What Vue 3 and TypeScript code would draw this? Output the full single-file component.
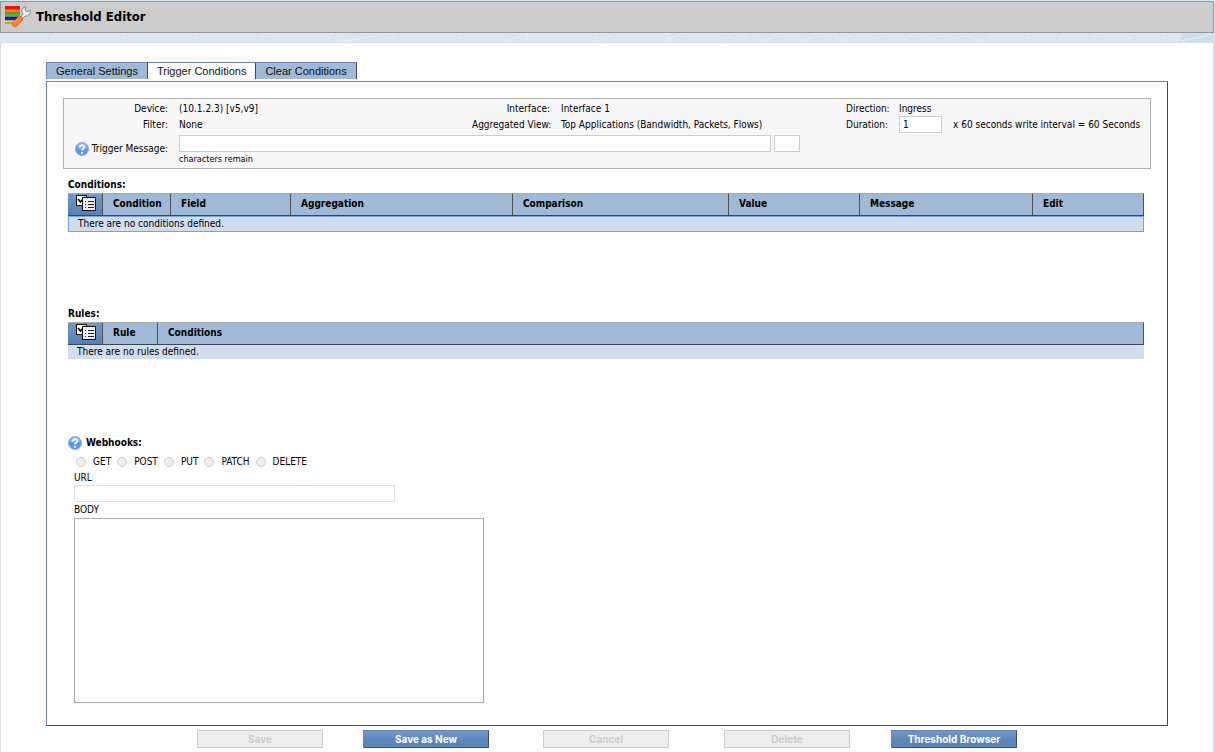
<script setup lang="ts">
import { ref } from 'vue'

const tabs = ['General Settings', 'Trigger Conditions', 'Clear Conditions']
const activeTab = ref('Trigger Conditions')
const duration = ref('1')
const message = ref('')
const methods = ['GET', 'POST', 'PUT', 'PATCH', 'DELETE']
const conditionColumns = ['Condition', 'Field', 'Aggregation', 'Comparison', 'Value', 'Message', 'Edit']
const actions = [
  { label: 'Save', enabled: false },
  { label: 'Save as New', enabled: true },
  { label: 'Cancel', enabled: false },
  { label: 'Delete', enabled: false },
  { label: 'Threshold Browser', enabled: true },
]
const streaks = [
  [56, 51], [127, 122], [197, 192], [265, 260], [332, 327], [395, 392], [461, 459],
  [528, 504], [528, 526], [596, 596], [617, 597], [668, 669], [684, 664], [735, 719],
  [745, 748], [779, 764], [818, 804], [834, 841], [855, 841],
  [886, 872], [914, 903], [942, 931], [992, 989], [1031, 1027], [1064, 1060],
  [1098, 1092], [1134, 1128], [1168, 1162],
]
</script>

<template>
  <div class="page">
    <header class="title-bar">
      <svg class="logo" viewBox="0 0 28 24" aria-hidden="true">
        <rect x="0" y="1" width="15" height="3" fill="#f01010" />
        <rect x="0" y="5" width="15" height="3" fill="#e8890c" />
        <rect x="0" y="8" width="15" height="3" fill="#18d838" />
        <rect x="0" y="12" width="13" height="3" fill="#1010e8" />
        <rect x="0" y="15" width="10" height="3" fill="#e8e020" />
        <path d="M0 4.5H15M0 8H15M0 11.5H14M0 15H11M0 18H8" stroke="#555" stroke-width=".7" />
        <path d="M14 14L18 9C15 5 18 2 21 2L20 5L22 7L25 5C26 9 23 12 20 11L16 15Z" fill="#eee" stroke="#888" stroke-width="1" />
        <path d="M10 19L15 14" stroke="#c4602a" stroke-width="6" stroke-linecap="round" />
        <path d="M10 19L15 14" stroke="#ff7a2c" stroke-width="5" stroke-linecap="round" />
        <path d="M9 18L13 14" stroke="#ffb27c" stroke-width="1" stroke-linecap="round" />
      </svg>
      <h1>Threshold Editor</h1>
    </header>
    <svg class="strip" viewBox="0 0 1215 9" preserveAspectRatio="none" aria-hidden="true">
      <path d="M1184 0H1215V9H1180Z" fill="#c9dff2" />
      <path v-for="(s, i) in streaks" :key="i" :d="`M${s[0]} 0L${s[1]} 9`" stroke="#e8f1f8" stroke-width="1" />
      <path d="M340 9L385 1M960 1L985 9M1182 8L1213 1" stroke="#e8f1f8" fill="none" />
    </svg>

    <main class="panel">
      <nav class="tabs" role="tablist">
        <button
          v-for="t in tabs"
          :key="t"
          type="button"
          role="tab"
          :aria-selected="activeTab === t"
          :class="['tab', { active: activeTab === t }]"
          @click="activeTab = t"
        >{{ t }}</button>
      </nav>

      <div class="content">
        <section class="info">
          <span class="label">Device:</span><span>(10.1.2.3) [v5,v9]</span>
          <span class="label">Interface:</span><span>Interface 1</span>
          <span class="label">Direction:</span><span>Ingress</span>
          <span class="label">Filter:</span><span>None</span>
          <span class="label">Aggregated View:</span><span>Top Applications (Bandwidth, Packets, Flows)</span>
          <label class="label" for="duration">Duration:</label>
          <span class="duration">
            <input id="duration" v-model="duration" type="text">
            <span>x 60 seconds write interval = 60 Seconds</span>
          </span>
          <label class="label message-label" for="message">
            <svg class="help" viewBox="0 0 14 14" aria-hidden="true">
              <circle cx="7" cy="7" r="6.5" fill="#5b94f5" stroke="#8fb0e6" />
              <path d="M2 6A5 5 0 0 1 12 6Q7 8 2 6Z" fill="#8db7fb" />
              <path d="M4.8 5.4C4.8 2.5 9.3 2.6 9.3 5.1C9.3 6.8 7 6.7 7 8.6" fill="none" stroke="#fff" stroke-width="1.7" />
              <circle cx="7" cy="10.8" r="1.1" fill="#fff" />
            </svg>
            Trigger Message:
          </label>
          <div class="message">
            <div class="message-row">
              <input id="message" v-model="message" class="message-input" type="text">
              <input class="counter" type="text" aria-label="Characters remaining" readonly>
            </div>
            <small>characters remain</small>
          </div>
        </section>

        <section class="block">
          <h2>Conditions:</h2>
          <table class="conditions">
            <colgroup>
              <col class="c-icon"><col class="c-cond"><col class="c-field"><col class="c-agg">
              <col class="c-comp"><col class="c-val"><col class="c-msg"><col class="c-edit">
            </colgroup>
            <thead>
              <tr>
                <th class="pick">
                  <button type="button" aria-label="Select conditions">
                    <svg viewBox="0 0 20 16" aria-hidden="true">
                      <rect x=".5" y=".5" width="10" height="10" fill="#fff" stroke="#111" />
                      <path d="M2 4L4.5 7L9 2" fill="none" stroke="#111" stroke-width="1.8" />
                      <rect x="6.5" y="2.5" width="13" height="13" fill="#eee" stroke="#111" />
                      <path d="M9 6.5H10M9 9.5H10M9 12.5H10M12 6.5H18M12 9.5H18M12 12.5H18" stroke="#222" />
                    </svg>
                  </button>
                </th>
                <th v-for="c in conditionColumns" :key="c" scope="col">{{ c }}</th>
              </tr>
            </thead>
            <tbody>
              <tr><td colspan="8">There are no conditions defined.</td></tr>
            </tbody>
          </table>
        </section>

        <section class="block">
          <h2>Rules:</h2>
          <table class="rules">
            <colgroup><col class="c-icon"><col class="c-rule"><col></colgroup>
            <thead>
              <tr>
                <th class="pick">
                  <button type="button" aria-label="Select rules">
                    <svg viewBox="0 0 20 16" aria-hidden="true">
                      <rect x=".5" y=".5" width="10" height="10" fill="#fff" stroke="#111" />
                      <path d="M2 4L4.5 7L9 2" fill="none" stroke="#111" stroke-width="1.8" />
                      <rect x="6.5" y="2.5" width="13" height="13" fill="#eee" stroke="#111" />
                      <path d="M9 6.5H10M9 9.5H10M9 12.5H10M12 6.5H18M12 9.5H18M12 12.5H18" stroke="#222" />
                    </svg>
                  </button>
                </th>
                <th scope="col">Rule</th>
                <th scope="col">Conditions</th>
              </tr>
            </thead>
            <tbody>
              <tr><td colspan="3">There are no rules defined.</td></tr>
            </tbody>
          </table>
        </section>

        <section class="webhooks">
          <h2>
            <svg class="help" viewBox="0 0 14 14" aria-hidden="true">
              <circle cx="7" cy="7" r="6.5" fill="#5b94f5" stroke="#8fb0e6" />
              <path d="M2 6A5 5 0 0 1 12 6Q7 8 2 6Z" fill="#8db7fb" />
              <path d="M4.8 5.4C4.8 2.5 9.3 2.6 9.3 5.1C9.3 6.8 7 6.7 7 8.6" fill="none" stroke="#fff" stroke-width="1.7" />
              <circle cx="7" cy="10.8" r="1.1" fill="#fff" />
            </svg>
            Webhooks:
          </h2>
          <div class="fields">
            <div class="methods">
              <label v-for="m in methods" :key="m"><input type="radio" name="method" :value="m" disabled>{{ m }}</label>
            </div>
            <label for="url">URL</label>
            <input id="url" class="url" type="text" disabled>
            <label for="body">BODY</label>
            <textarea id="body" class="body" disabled></textarea>
          </div>
        </section>
      </div>

      <footer class="actions">
        <button v-for="a in actions" :key="a.label" type="button" :disabled="!a.enabled">{{ a.label }}</button>
      </footer>
    </main>
  </div>
</template>

<style>
body {
  background: #dbe7f2;
}
</style>

<style scoped>
* {
  box-sizing: border-box;
}
.page {
  min-height: 100vh;
  display: flex;
  flex-direction: column;
  padding: 1px 1px 0 0;
  font: 10px/16px "DejaVu Sans Condensed", "DejaVu Sans", sans-serif;
  color: #000;
}
.title-bar {
  display: flex;
  align-items: center;
  gap: 3px;
  height: 32px;
  padding-left: 4px;
  background: #ccc;
  border: 1px solid #999;
}
.logo {
  width: 28px;
  height: 24px;
}
h1 {
  margin: 0;
  font-size: 13px;
}
.strip {
  display: block;
  width: 100%;
  height: 9px;
}
.panel {
  flex: 1;
  padding: 19px 45px 3px;
  background: #fdfdfd;
  border: 1px solid #ddd;
  border-bottom: 0;
}
.tabs {
  display: flex;
  margin-bottom: 2px;
}
.tab {
  height: 17px;
  padding: 1px 9px 0;
  font: 11px/15px "Liberation Sans", Arial, sans-serif;
  color: #111;
  background: #a0b9d6;
  border: 1px solid #6985b8;
  border-right-color: #46467a;
  border-bottom: 0;
}
.tab + .tab {
  border-left: 0;
}
.tab.active {
  background: #fff;
}
.content {
  padding: 16px 16px 22px;
  background: #fff;
  border: 1px solid #6985b0;
  border-right-color: #46467a;
  border-bottom-color: #46467a;
}
.info {
  display: grid;
  grid-template-columns: 104px 282fr 78px 274fr 42px 251px;
  grid-template-rows: 16px 16px auto;
  column-gap: 11px;
  padding: 2px 0;
  background: #f7f7f7;
  border: 1px solid #b0b0b0;
}
.label {
  text-align: right;
  white-space: nowrap;
}
.info input,
.url {
  height: 17px;
  padding: 0 3px;
  font: inherit;
  background: #fff;
  border: 1px solid #ccc;
}
.duration {
  display: flex;
  align-items: flex-end;
  gap: 11px;
  white-space: nowrap;
}
.duration input {
  width: 43px;
}
.message-label {
  display: flex;
  align-items: center;
  justify-content: flex-end;
  gap: 3px;
  padding-bottom: 2px;
}
.message {
  grid-column: 2 / -1;
  padding-top: 2px;
}
.message-row {
  display: flex;
  gap: 3px;
}
.message-input {
  width: 592px;
}
.counter {
  width: 26px;
}
.message small {
  display: block;
  font-size: 9px;
  line-height: 14px;
}
.help {
  width: 14px;
  height: 14px;
}
h2 {
  margin: 0;
  font-size: 10px;
  line-height: 16px;
}
.block {
  min-height: 129px;
  padding: 8px 7px 0 5px;
}
table {
  width: 100%;
  table-layout: fixed;
  border-collapse: separate;
  border-spacing: 0;
}
.c-icon { width: 35px; }
.c-cond { width: 68px; }
.c-field { width: 120px; }
.c-agg { width: 222px; }
.c-comp { width: 216px; }
.c-val { width: 131px; }
.c-msg { width: 173px; }
.c-edit { width: 111px; }
.c-rule { width: 55px; }
th {
  height: 23px;
  padding: 0 0 2px 10px;
  text-align: left;
  background: #a0b9d6;
  border-top: 1px solid #aaa;
  border-right: 1px solid #50504c;
  border-bottom: 1px solid #40454c;
}
th.pick {
  padding: 0 0 4px 8px;
  background: linear-gradient(#7598c4, #5580b2);
}
.pick button {
  display: block;
  padding: 0;
  background: none;
  border: 0;
}
.pick svg {
  display: block;
  width: 20px;
  height: 16px;
}
td {
  height: 14px;
  padding: 0 9px;
  line-height: 14px;
  background: #d0ddef;
}
.conditions td {
  border: 1px solid #75a3dc;
}
.webhooks {
  padding: 8px 5px 0;
}
.webhooks h2 {
  display: flex;
  align-items: center;
  gap: 4px;
}
.fields {
  display: flex;
  flex-direction: column;
  align-items: flex-start;
  padding: 2px 6px 0;
  line-height: 15px;
}
.methods {
  display: flex;
  gap: 4px;
  height: 17px;
}
.methods label {
  display: flex;
  align-items: center;
  gap: 7px;
}
.methods input {
  appearance: none;
  width: 10px;
  height: 10px;
  margin: 0 0 0 2px;
  background: #eee;
  border: 1px solid #ccc;
  border-radius: 50%;
}
.url {
  width: 321px;
  border-color: #e0e0e0;
}
.body {
  width: 410px;
  height: 185px;
  margin: 1px 0 0;
  font: inherit;
  background: #fff;
  border: 1px solid #a8a8a8;
  resize: none;
}
.actions {
  display: grid;
  grid-template-columns: 152px 180px 180px 182px 152px;
  justify-content: center;
  justify-items: center;
  padding-top: 4px;
}
.actions button {
  width: 126px;
  height: 18px;
  padding: 0;
  font: bold 10px/14px Inter, sans-serif;
  color: #fff;
  background: linear-gradient(#7599c8, #5c85b5 60%);
  border: 1px solid #5c85b8;
  border-right-color: #46467a;
  border-bottom-color: #46467a;
}
.actions button:disabled {
  color: #ccc;
  background: #eee;
  border-color: #ccc;
}
</style>
